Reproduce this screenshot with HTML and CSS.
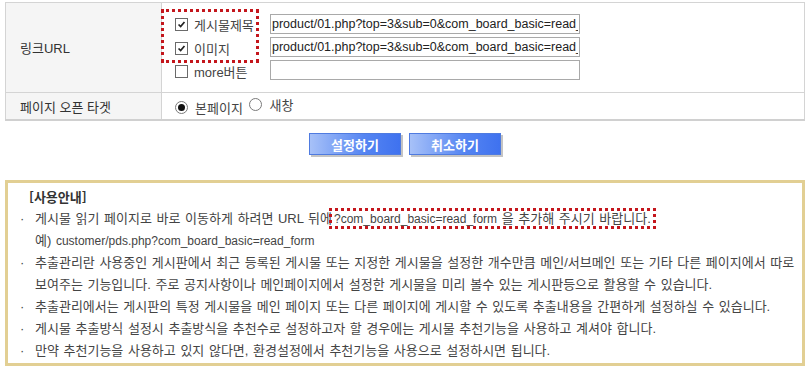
FILE: index.html
```html
<!DOCTYPE html>
<html lang="ko">
<head>
    <meta charset="UTF-8">
    <title>추출관리 설정</title>
    <link rel="stylesheet" href="styles.css">
</head>
<body>
    <table class="setting-table">
        <tr class="row-link">
            <th>링크URL</th>
            <td>
                <div class="link-grid">
                    <div class="link-checks">
                        <div class="mark">
                            <label class="chk-row"><span class="chk on"><svg viewBox="0 0 13 13"><path d="M3 6.5 L5.5 9 L10 3.5"/></svg></span>게시물제목</label>
                            <label class="chk-row"><span class="chk on"><svg viewBox="0 0 13 13"><path d="M3 6.5 L5.5 9 L10 3.5"/></svg></span>이미지</label>
                        </div>
                        <label class="chk-row"><span class="chk"></span>more버튼</label>
                    </div>
                    <div class="link-inputs">
                        <input type="text" value="product/01.php?top=3&amp;sub=0&amp;com_board_basic=read_form">
                        <input type="text" value="product/01.php?top=3&amp;sub=0&amp;com_board_basic=read_form">
                        <input type="text" value="">
                    </div>
                </div>
            </td>
        </tr>
        <tr class="row-target">
            <th>페이지 오픈 타겟</th>
            <td>
                <label class="radio-row"><span class="radio on"></span>본페이지</label>
                <label class="radio-row"><span class="radio"></span>새창</label>
            </td>
        </tr>
    </table>

    <div class="btn-area">
        <button class="btn">설정하기</button>
        <button class="btn">취소하기</button>
    </div>

    <div class="guide">
        <p class="guide-title">[사용안내]</p>
        <ul>
            <li><span class="dot">·</span><span>게시물 읽기 페이지로 바로 이동하게 하려면 URL 뒤에<span class="hl"><span class="code">?com_board_basic=read_form</span> 을 추가해 주시기 바랍니다.</span><br>예) <span class="code">customer/pds.php?com_board_basic=read_form</span></span></li>
            <li><span class="dot">·</span><span>추출관리란 사용중인 게시판에서 최근 등록된 게시물 또는 지정한 게시물을 설정한 개수만큼 메인/서브메인 또는 기타 다른 페이지에서 따로<br>보여주는 기능입니다. 주로 공지사항이나 메인페이지에서 설정한 게시물을 미리 볼수 있는 게시판등으로 활용할 수 있습니다.</span></li>
            <li><span class="dot">·</span><span>추출관리에서는 게시판의 특정 게시물을 메인 페이지 또는 다른 페이지에 게시할 수 있도록 추출내용을 간편하게 설정하실 수 있습니다.</span></li>
            <li><span class="dot">·</span><span>게시물 추출방식 설정시 추출방식을 추천수로 설정하고자 할 경우에는 게시물 추천기능을 사용하고 계셔야 합니다.</span></li>
            <li><span class="dot">·</span><span>만약 추천기능을 사용하고 있지 않다면, 환경설정에서 추천기능을 사용으로 설정하시면 됩니다.</span></li>
        </ul>
    </div>
</body>
</html>
```

FILE: styles.css
```css
body {
    margin: 0;
    padding: 2px 4px 0 5px;
    font-family: "Liberation Sans", "Noto Sans CJK KR", sans-serif;
    font-size: 13px;
    color: #333;
    background: #fff;
}
.setting-table {
    width: 800px;
    border-collapse: collapse;
    border-top: 1px solid #d4d4d4;
    border-bottom: 2px solid #d0d0d0;
    border-left: 1px solid #d4d4d4;
    border-right: 1px solid #d4d4d4;
}
.setting-table th {
    width: 141px;
    padding: 0 0 0 14px;
    background: #f5f5f5;
    border-right: 1px solid #d4d4d4;
    text-align: left;
    font-weight: normal;
    color: #333;
}
.setting-table td {
    padding: 0 0 0 13px;
}
.row-link th, .row-link td {
    height: 89px;
    border-bottom: 1px solid #d4d4d4;
}
.row-target th, .row-target td {
    height: 26px;
}
.link-grid {
    display: flex;
    padding: 1px 0 1px;
}
.link-checks {
    width: 95px;
    display: flex;
    flex-direction: column;
    gap: 3px;
}
.mark {
    display: flex;
    flex-direction: column;
    gap: 4px;
    margin: -2px 0 -2px -11px;
    padding: 2px 0 2px 11px;
    width: 81px;
    outline: 3px dotted #c4161c;
}
.chk-row {
    display: flex;
    align-items: center;
    height: 20px;
    white-space: nowrap;
    color: #444;
}
.chk {
    width: 11px;
    height: 11px;
    border: 1px solid #6a6a6a;
    background: #fff;
    margin-right: 6px;
    display: flex;
}
.chk svg {
    width: 11px;
    height: 11px;
    fill: none;
    stroke: #222;
    stroke-width: 2;
}
.link-inputs {
    display: flex;
    flex-direction: column;
    gap: 3px;
}
.link-inputs input {
    box-sizing: border-box;
    width: 310px;
    height: 20px;
    margin: 0;
    padding: 0 1px;
    border: 1px solid #a9a9a9;
    font-family: "Liberation Sans", sans-serif;
    font-size: 12.5px;
    color: #222;
    outline: none;
}
.radio-row {
    display: inline-flex;
    align-items: center;
    margin-right: 3px;
    color: #444;
}
.radio {
    box-sizing: border-box;
    width: 13px;
    height: 13px;
    border: 1px solid #7a7a7a;
    border-radius: 50%;
    margin-right: 7px;
    display: flex;
    align-items: center;
    justify-content: center;
    background: #fff;
}
.radio.on::after {
    content: "";
    width: 7px;
    height: 7px;
    border-radius: 50%;
    background: #111;
}
.btn-area {
    display: flex;
    justify-content: center;
    gap: 8px;
    width: 800px;
    margin-top: 12px;
}
.btn {
    width: 92px;
    height: 22px;
    padding: 0;
    border: 1px solid #4f7be0;
    background: linear-gradient(to right, #a7c1f8, #5585f2 60%, #3f72ef);
    box-shadow: 2px 2px 0 #c4c4c4;
    color: #fff;
    font-family: "Noto Sans CJK KR", sans-serif;
    font-size: 13px;
    font-weight: bold;
    cursor: pointer;
}
.guide {
    width: 794px;
    margin-top: 25px;
    border: 3px solid #e2cf93;
    padding: 3px 0 1px;
    line-height: 22px;
    color: #444;
}
.guide-title {
    margin: 0;
    padding-left: 21px;
    font-family: "Noto Sans CJK KR", sans-serif;
    font-weight: bold;
    font-size: 13px;
    color: #333;
}
.guide ul {
    margin: 0;
    padding: 0 0 0 12px;
    list-style: none;
}
.guide li {
    display: flex;
    white-space: nowrap;
    word-spacing: 1px;
}
.dot {
    width: 15px;
    flex-shrink: 0;
}
.code {
    font-size: 12px;
}
.hl {
    padding: 0 2px;
    outline: 3px dotted #c4161c;
}
```
